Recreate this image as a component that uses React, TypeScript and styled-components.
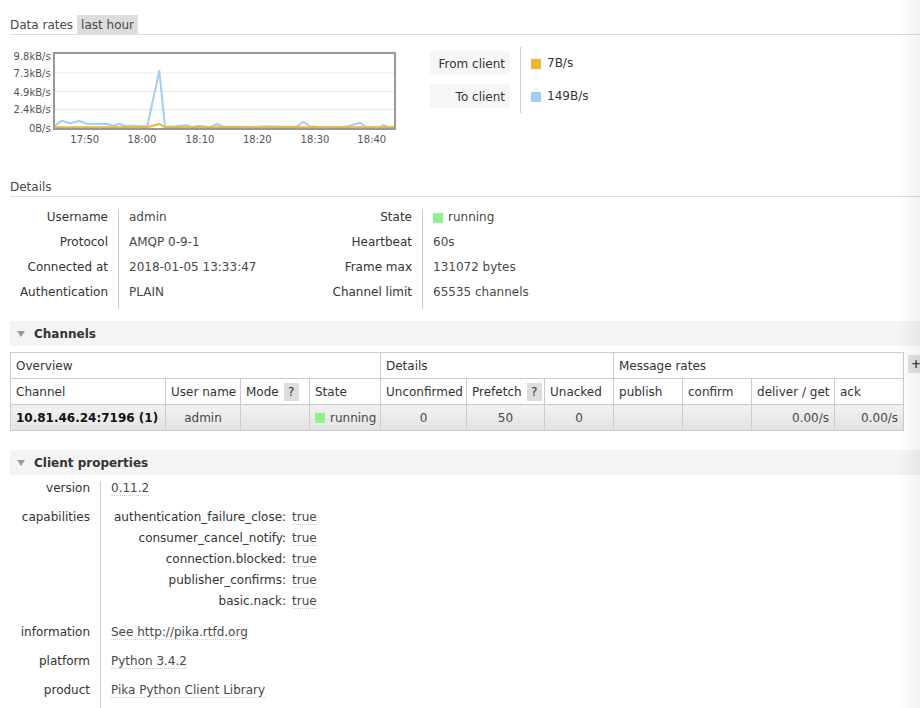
import React from "react"
import styled, { createGlobalStyle } from "styled-components"

const GlobalStyle = createGlobalStyle`
  html, body {
    margin: 0;
    padding: 0;
    background: #fff;
  }
  body {
    font-family: "DejaVu Sans", Verdana, sans-serif;
    font-size: 12px;
    line-height: 15px;
    color: #484848;
    overflow: hidden;
  }
  body::after {
    content: "";
    position: fixed;
    top: 0;
    right: 0;
    bottom: 0;
    width: 20px;
    background: linear-gradient(to right, rgba(0, 0, 0, 0), rgba(0, 0, 0, 0.05));
    pointer-events: none;
  }
`

const Page = styled.div`
  padding: 15px 0 0 10px;
`

const Title = styled.h2<{ $top?: number }>`
  margin: ${(p) => p.$top ?? 0}px 0 0;
  display: flex;
  gap: 4px;
  font-size: 12px;
  font-weight: normal;
  line-height: 19px;
  border-bottom: 1px solid #ddd;
`

const TitleText = styled.span`
  padding-top: 1px;
  line-height: 18px;
`

const RangeTag = styled.span`
  background: #ddd;
  padding: 1px 4px 0;
  line-height: 18px;
`

const ChartRow = styled.div`
  display: flex;
  margin-top: 5px;
  height: 110px;
`

const Legend = styled.div`
  display: flex;
  margin: 7px 0 0 30px;
  height: 66px;
`

const LegendCol = styled.div<{ $divider?: boolean }>`
  display: flex;
  flex-direction: column;
  gap: 9px;
  padding: 4px ${(p) => (p.$divider ? "10px" : "0")} 4px ${(p) => (p.$divider ? "0" : "10px")};
  border-right: ${(p) => (p.$divider ? "1px solid #ccc" : "none")};
`

const LegendButton = styled.div`
  width: 80px;
  height: 24px;
  box-sizing: border-box;
  padding: 2px 5px 0 0;
  line-height: 22px;
  text-align: right;
  background: #f6f6f6;
  border-radius: 3px;
  color: #333;
`

const LegendValue = styled.div`
  display: flex;
  align-items: center;
  height: 24px;
  padding-top: 1px;
  box-sizing: border-box;
  color: #333;
`

const Swatch = styled.span<{ $color: string }>`
  display: inline-block;
  width: 10px;
  height: 10px;
  margin-right: 6px;
  background: ${(p) => p.$color};
`

const FactsRow = styled.div`
  display: flex;
  margin-top: 12px;
`

const Facts = styled.table<{ $label: number; $value?: number }>`
  border-collapse: collapse;
  th,
  td {
    padding: 1px 0 9px;
    line-height: 15px;
    vertical-align: top;
    white-space: nowrap;
  }
  th {
    width: ${(p) => p.$label - 10}px;
    padding-right: 10px;
    text-align: right;
    font-weight: normal;
    border-right: 1px solid #ccc;
    color: #333;
  }
  td {
    width: ${(p) => (p.$value ? `${p.$value - 10}px` : "auto")};
    padding-left: 10px;
  }
`

const StateCell = styled.span`
  display: inline-flex;
  align-items: center;
  height: 15px;
  vertical-align: top;
`

const StateDot = styled.span`
  width: 10px;
  height: 10px;
  margin-right: 5px;
  background: #8ef28e;
`

const SectionBar = styled.div<{ $top: number }>`
  display: flex;
  align-items: center;
  gap: 9px;
  margin-top: ${(p) => p.$top}px;
  height: 24px;
  padding: 1px 0 0 7px;
  background: #f4f4f4;
  font-weight: bold;
  color: #333;
`

const Arrow = styled.span`
  width: 0;
  height: 0;
  margin-top: -1px;
  border-left: 4.5px solid transparent;
  border-right: 4.5px solid transparent;
  border-top: 6px solid #9a9a9a;
`

const TableRow = styled.div`
  display: flex;
  align-items: flex-start;
  gap: 4px;
  margin-top: 6px;
  width: 930px;
`

const Grid = styled.table`
  border-collapse: collapse;
  table-layout: fixed;
  width: 894px;
  flex: none;
  th,
  td {
    border: 1px solid #ccc;
    height: 24px;
    padding: 1px 5px 0;
    white-space: nowrap;
    overflow: hidden;
  }
  th {
    font-weight: normal;
    text-align: left;
    background: #fff;
    color: #333;
  }
`

const DataCell = styled.td<{ $align?: "left" | "center" | "right"; $bold?: boolean }>`
  text-align: ${(p) => p.$align ?? "left"};
  font-weight: ${(p) => (p.$bold ? "bold" : "normal")};
  color: ${(p) => (p.$bold ? "#111" : "#484848")};
  background: linear-gradient(#f2f2f2, #e3e3e3);
`

const Help = styled.span`
  display: inline-block;
  width: 15px;
  height: 18px;
  margin-left: 5px;
  line-height: 18px;
  text-align: center;
  vertical-align: middle;
  background: #ddd;
`

const PlusButton = styled.div`
  flex: none;
  width: 20px;
  height: 18px;
  margin-top: 3px;
  padding-left: 3px;
  line-height: 18px;
  font-weight: bold;
  background: #e2e2e2;
  color: #444;
`

const Props = styled.table`
  border-collapse: collapse;
  margin-top: 6px;
  th,
  td {
    padding: 0 0 14px;
    line-height: 15px;
    vertical-align: top;
    white-space: nowrap;
  }
  th {
    width: 80px;
    padding-right: 10px;
    text-align: right;
    font-weight: normal;
    border-right: 1px solid #ccc;
    color: #333;
  }
  td {
    padding-left: 10px;
  }
`

const Nested = styled.table`
  border-collapse: collapse;
  margin: -3px 0 -1px;
  th,
  td {
    padding: 3px;
    border: none;
    width: auto;
  }
`

const Value = styled.span`
  border-bottom: 1px dotted #ccc;
`

const blue: [number, number][] = [
  [55, 125.5], [61.7, 120.7], [70, 123.3], [79.3, 121], [86.7, 123.7], [106.7, 124],
  [113.3, 126], [119, 123.7], [125, 126], [133.3, 125.7], [140, 126.3], [147.3, 126.3],
  [159.3, 70.7], [165, 127], [176.7, 126.3], [186.7, 125.3], [191.7, 127.3], [198.3, 125.7],
  [210, 127.3], [216.7, 124], [223.3, 126.7], [236.7, 126.7], [243.3, 126.7], [250, 127.3],
  [266.7, 126.3], [283.3, 126.7], [296.7, 126.7], [303.3, 121.7], [310, 126.3], [316.7, 126.7],
  [343.3, 127], [350, 125.7], [360, 122.7], [366.7, 127.3], [380, 127], [383.3, 125],
  [388.3, 127.3], [395, 127],
]

const orange: [number, number][] = [
  [55, 127.3], [147.3, 127.3], [159.3, 124], [165, 127.3], [395, 127.3],
]

const toPoints = (pts: [number, number][]) =>
  pts.map(([x, y]) => `${x - 10},${y - 40}`).join(" ")

const yTicks = [
  { label: "9.8kB/s", y: 16 },
  { label: "7.3kB/s", y: 33.3 },
  { label: "4.9kB/s", y: 51.7 },
  { label: "2.4kB/s", y: 69.3 },
  { label: "0B/s", y: 87.7 },
]

const xTicks = [
  { label: "17:50", x: 74.7 },
  { label: "18:00", x: 132 },
  { label: "18:10", x: 190 },
  { label: "18:20", x: 247.3 },
  { label: "18:30", x: 305 },
  { label: "18:40", x: 361.7 },
]

const RateChart = () => (
  <svg width="390" height="110" viewBox="0 0 390 110">
    <defs>
      <clipPath id="plot">
        <rect x="45" y="14" width="340" height="74" />
      </clipPath>
    </defs>
    {[33, 51.3, 69.6].map((y) => (
      <line key={y} x1="45" x2="385" y1={y} y2={y} stroke="#e6e6e6" strokeWidth="1" />
    ))}
    <g clipPath="url(#plot)" fill="none" strokeWidth="2" strokeLinejoin="round">
      <polyline points={toPoints(blue)} stroke="#a1cdf7" />
      <polyline points={toPoints(orange)} stroke="#edb72f" />
    </g>
    <rect x="44" y="13" width="341" height="76" fill="none" stroke="#999" strokeWidth="2" />
    <g fontFamily="DejaVu Sans, Verdana, sans-serif" fontSize="10" fill="#545454">
      {yTicks.map((t) => (
        <text key={t.label} x="40.7" y={t.y + 0.5} textAnchor="end" dominantBaseline="central">
          {t.label}
        </text>
      ))}
      {xTicks.map((t) => (
        <text key={t.label} x={t.x} y="99.5" textAnchor="middle" dominantBaseline="central">
          {t.label}
        </text>
      ))}
    </g>
  </svg>
)

const capabilities = [
  "authentication_failure_close",
  "consumer_cancel_notify",
  "connection.blocked",
  "publisher_confirms",
  "basic.nack",
]

const colWidths = [155, 75, 69, 71, 86, 78, 69, 69, 69, 83, 69]

const App: React.FC = () => {
  return (
    <Page>
      <GlobalStyle />
      <Title>
        <TitleText>Data rates</TitleText>
        <RangeTag>last hour</RangeTag>
      </Title>
      <ChartRow>
        <RateChart />
        <Legend>
          <LegendCol $divider>
            <LegendButton>From client</LegendButton>
            <LegendButton>To client</LegendButton>
          </LegendCol>
          <LegendCol>
            <LegendValue>
              <Swatch $color="#edb72f" />
              7B/s
            </LegendValue>
            <LegendValue>
              <Swatch $color="#a1cdf7" />
              149B/s
            </LegendValue>
          </LegendCol>
        </Legend>
      </ChartRow>

      <Title $top={27}>
        <TitleText>Details</TitleText>
      </Title>
      <FactsRow>
        <Facts $label={108} $value={170}>
          <tbody>
            <tr><th>Username</th><td>admin</td></tr>
            <tr><th>Protocol</th><td>AMQP 0-9-1</td></tr>
            <tr><th>Connected at</th><td>2018-01-05 13:33:47</td></tr>
            <tr><th>Authentication</th><td>PLAIN</td></tr>
          </tbody>
        </Facts>
        <Facts $label={133}>
          <tbody>
            <tr>
              <th>State</th>
              <td>
                <StateCell><StateDot />running</StateCell>
              </td>
            </tr>
            <tr><th>Heartbeat</th><td>60s</td></tr>
            <tr><th>Frame max</th><td>131072 bytes</td></tr>
            <tr><th>Channel limit</th><td>65535 channels</td></tr>
          </tbody>
        </Facts>
      </FactsRow>

      <SectionBar $top={12}>
        <Arrow />
        Channels
      </SectionBar>
      <TableRow>
        <Grid>
          <colgroup>
            {colWidths.map((w, i) => (
              <col key={i} style={{ width: w }} />
            ))}
          </colgroup>
          <thead>
            <tr>
              <th colSpan={4}>Overview</th>
              <th colSpan={3}>Details</th>
              <th colSpan={4}>Message rates</th>
            </tr>
            <tr>
              <th>Channel</th>
              <th>User name</th>
              <th>Mode<Help>?</Help></th>
              <th>State</th>
              <th>Unconfirmed</th>
              <th>Prefetch<Help>?</Help></th>
              <th>Unacked</th>
              <th>publish</th>
              <th>confirm</th>
              <th>deliver / get</th>
              <th>ack</th>
            </tr>
          </thead>
          <tbody>
            <tr>
              <DataCell $bold>10.81.46.24:7196 (1)</DataCell>
              <DataCell $align="center">admin</DataCell>
              <DataCell />
              <DataCell $align="center">
                <StateCell><StateDot />running</StateCell>
              </DataCell>
              <DataCell $align="center">0</DataCell>
              <DataCell $align="center">50</DataCell>
              <DataCell $align="center">0</DataCell>
              <DataCell />
              <DataCell />
              <DataCell $align="right">0.00/s</DataCell>
              <DataCell $align="right">0.00/s</DataCell>
            </tr>
          </tbody>
        </Grid>
        <PlusButton>+</PlusButton>
      </TableRow>

      <SectionBar $top={19}>
        <Arrow />
        Client properties
      </SectionBar>
      <Props>
        <tbody>
          <tr>
            <th>version</th>
            <td><Value>0.11.2</Value></td>
          </tr>
          <tr>
            <th>capabilities</th>
            <td>
              <Nested>
                <tbody>
                  {capabilities.map((c) => (
                    <tr key={c}>
                      <th>{c}:</th>
                      <td><Value>true</Value></td>
                    </tr>
                  ))}
                </tbody>
              </Nested>
            </td>
          </tr>
          <tr>
            <th>information</th>
            <td><Value>See http://pika.rtfd.org</Value></td>
          </tr>
          <tr>
            <th>platform</th>
            <td><Value>Python 3.4.2</Value></td>
          </tr>
          <tr>
            <th>product</th>
            <td><Value>Pika Python Client Library</Value></td>
          </tr>
        </tbody>
      </Props>
    </Page>
  )
}

export default App
